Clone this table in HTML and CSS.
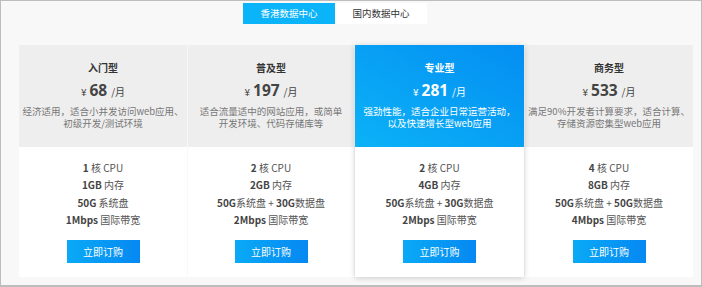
FILE: index.html
```html
<!DOCTYPE html>
<html lang="zh">
<head>
<meta charset="utf-8">
<link rel="stylesheet" href="styles.css">
</head>
<body>
<div class="frame">
  <div class="tabs">
    <div class="tab active">香港数据中心</div>
    <div class="tab">国内数据中心</div>
  </div>
  <div class="cards">
    <div class="card">
      <div class="head">
        <div class="title">入门型</div>
        <div class="price"><span class="yen">¥</span><span class="num">68</span><span class="unit">/月</span></div>
        <div class="desc">经济适用，适合小并发访问web应用、<br>初级开发/测试环境</div>
      </div>
      <div class="body">
        <div class="spec"><b>1</b> 核 CPU</div>
        <div class="spec"><b>1GB</b> 内存</div>
        <div class="spec"><b>50G</b> 系统盘</div>
        <div class="spec"><b>1Mbps</b> 国际带宽</div>
        <div class="btn">立即订购</div>
      </div>
    </div>
    <div class="card">
      <div class="head">
        <div class="title">普及型</div>
        <div class="price"><span class="yen">¥</span><span class="num">197</span><span class="unit">/月</span></div>
        <div class="desc">适合流量适中的网站应用，或简单<br>开发环境、代码存储库等</div>
      </div>
      <div class="body">
        <div class="spec"><b>2</b> 核 CPU</div>
        <div class="spec"><b>2GB</b> 内存</div>
        <div class="spec"><b>50G</b>系统盘 + <b>30G</b>数据盘</div>
        <div class="spec"><b>2Mbps</b> 国际带宽</div>
        <div class="btn">立即订购</div>
      </div>
    </div>
    <div class="card featured">
      <div class="head">
        <div class="title">专业型</div>
        <div class="price"><span class="yen">¥</span><span class="num">281</span><span class="unit">/月</span></div>
        <div class="desc">强劲性能，适合企业日常运营活动，<br>以及快速增长型web应用</div>
      </div>
      <div class="body">
        <div class="spec"><b>2</b> 核 CPU</div>
        <div class="spec"><b>4GB</b> 内存</div>
        <div class="spec"><b>50G</b>系统盘 + <b>30G</b>数据盘</div>
        <div class="spec"><b>2Mbps</b> 国际带宽</div>
        <div class="btn">立即订购</div>
      </div>
    </div>
    <div class="card">
      <div class="head">
        <div class="title">商务型</div>
        <div class="price"><span class="yen">¥</span><span class="num">533</span><span class="unit">/月</span></div>
        <div class="desc">满足90%开发者计算要求，适合计算、<br>存储资源密集型web应用</div>
      </div>
      <div class="body">
        <div class="spec"><b>4</b> 核 CPU</div>
        <div class="spec"><b>8GB</b> 内存</div>
        <div class="spec"><b>50G</b>系统盘 + <b>50G</b>数据盘</div>
        <div class="spec"><b>4Mbps</b> 国际带宽</div>
        <div class="btn">立即订购</div>
      </div>
    </div>
  </div>
</div>
</body>
</html>
```

FILE: styles.css
```css
html, body {
  margin: 0;
  padding: 0;
}
body {
  font-family: "Noto Sans CJK SC", "Noto Sans", sans-serif;
  color: #333;
}
.frame {
  box-sizing: border-box;
  width: 702px;
  height: 287px;
  border: 1px solid #bdbdbd;
  border-bottom-width: 2px;
  background: #f8f8f8;
  padding-top: 2px;
}
.tabs {
  display: flex;
  padding-left: 242px;
  height: 21px;
}
.tab {
  width: 92px;
  height: 21px;
  line-height: 21px;
  text-align: center;
  font-size: 9.5px;
  background: #fff;
  color: #333;
}
.tab.active {
  background: #0bb3f8;
  color: #fff;
}
.cards {
  margin-top: 21px;
  margin-left: 18px;
  display: grid;
  grid-template-columns: 168px 166px 169px 168px;
  column-gap: 1px;
}
.card {
  display: flex;
  flex-direction: column;
  background: #fff;
}
.card.featured {
  box-shadow: 0 1px 6px rgba(0, 0, 0, 0.18);
  position: relative;
  z-index: 1;
}
.head {
  height: 102px;
  box-sizing: border-box;
  background: #eeeeee;
  text-align: center;
  padding-top: 16px;
}
.featured .head {
  background: linear-gradient(to top right, #0bb2f7 0%, #048ef2 100%);
  color: #fff;
}
.title {
  font-size: 10px;
  font-weight: bold;
  line-height: 14px;
  color: #333;
}
.price {
  margin-top: 5px;
  height: 20px;
  line-height: 20px;
  display: flex;
  justify-content: center;
  align-items: baseline;
  color: #444;
}
.yen {
  font-size: 10px;
  margin-right: 3px;
}
.num {
  font-family: "Open Sans", "Noto Sans", sans-serif;
  font-weight: bold;
  font-size: 15.5px;
}
.unit {
  font-size: 10px;
  margin-left: 4px;
}
.desc {
  margin-top: 5px;
  font-size: 9.5px;
  line-height: 12px;
  color: #777;
  white-space: nowrap;
}
.featured .title,
.featured .price,
.featured .desc {
  color: #fff;
}
.body {
  height: 130px;
  box-sizing: border-box;
  padding-top: 12px;
  display: flex;
  flex-direction: column;
  align-items: center;
}
.spec {
  font-size: 10px;
  line-height: 17.3px;
  color: #555;
  white-space: nowrap;
}
.spec b {
  color: #444;
  font-weight: 600;
}
.btn {
  margin-top: 12px;
  width: 73px;
  height: 23px;
  line-height: 23px;
  text-align: center;
  font-size: 10px;
  color: #fff;
  background: linear-gradient(to right, #0aaaf6, #0588f2);
}
```
